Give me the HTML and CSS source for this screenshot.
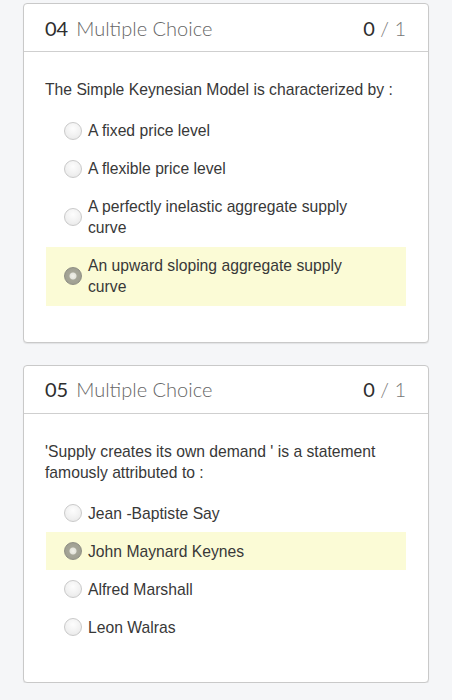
FILE: index.html
```html
<!DOCTYPE html>
<html>
<head>
<meta charset="utf-8">
<link rel="stylesheet" href="styles.css">
</head>
<body>
<div class="page">
  <section class="card">
    <header class="card-head">
      <div class="title"><span class="num">04</span><span class="type">Multiple Choice</span></div>
      <div class="score"><span class="got">0</span><span class="total"> / 1</span></div>
    </header>
    <div class="card-body">
      <p class="question">The Simple Keynesian Model is characterized by :</p>
      <ul class="options">
        <li class="option"><span class="radio"></span><span class="label">A fixed price level</span></li>
        <li class="option"><span class="radio"></span><span class="label">A flexible price level</span></li>
        <li class="option"><span class="radio"></span><span class="label">A perfectly inelastic aggregate supply curve</span></li>
        <li class="option selected"><span class="radio"></span><span class="label">An upward sloping aggregate supply curve</span></li>
      </ul>
    </div>
  </section>
  <section class="card">
    <header class="card-head">
      <div class="title"><span class="num">05</span><span class="type">Multiple Choice</span></div>
      <div class="score"><span class="got">0</span><span class="total"> / 1</span></div>
    </header>
    <div class="card-body">
      <p class="question">'Supply creates its own demand ' is a statement famously attributed to :</p>
      <ul class="options">
        <li class="option"><span class="radio"></span><span class="label">Jean -Baptiste Say</span></li>
        <li class="option selected"><span class="radio"></span><span class="label">John Maynard Keynes</span></li>
        <li class="option"><span class="radio"></span><span class="label">Alfred Marshall</span></li>
        <li class="option"><span class="radio"></span><span class="label">Leon Walras</span></li>
      </ul>
    </div>
  </section>
</div>
</body>
</html>
```
FILE: styles.css
```css
html, body {
  margin: 0;
  padding: 0;
  background: #f5f6f8;
}
.page {
  width: 452px;
  padding: 3px 0 0 23px;
  box-sizing: border-box;
  display: flex;
  flex-direction: column;
  gap: 22px;
}
.card {
  width: 406px;
  box-sizing: border-box;
  background: #fff;
  border: 1px solid #c9c9c9;
  border-radius: 4px;
  box-shadow: 0 1px 1px rgba(0,0,0,0.08);
}
.card-head {
  height: 47px;
  border-bottom: 1px solid #cfcfcf;
  display: flex;
  align-items: center;
  justify-content: space-between;
  padding: 0 22px 0 21px;
  font-family: Lato, "Open Sans", sans-serif;
  font-size: 20px;
}
.num {
  color: #2e2e2e;
  font-weight: 400;
  margin-right: 8px;
}
.type {
  color: #666;
  font-weight: 300;
}
.got {
  color: #2e2e2e;
}
.total {
  color: #777;
  font-weight: 300;
}
.card-body {
  padding: 27px 22px 36px 21px;
}
.question {
  margin: 0 0 11.5px;
  font-family: "Liberation Sans", Arial, sans-serif;
  font-size: 15.7px;
  line-height: 21px;
  color: #383838;
}
.options {
  list-style: none;
  margin: 0;
  padding: 0;
}
.option {
  display: flex;
  align-items: center;
  padding: 8.5px 40px 8.5px 18px;
  margin-left: 1px;
  font-family: "Liberation Sans", Arial, sans-serif;
  font-size: 15.7px;
  line-height: 21px;
  color: #383838;
}
.option.selected {
  background: #fbfbd6;
}
.radio {
  flex: none;
  width: 18px;
  height: 18px;
  box-sizing: border-box;
  border-radius: 50%;
  border: 1px solid #cacaca;
  background: radial-gradient(circle at 50% 35%, #fdfdfd 0%, #f0f0f0 60%, #e4e4e4 100%);
  margin-right: 6px;
}
.option.selected .radio {
  border: 1px solid #8e8e84;
  background: radial-gradient(circle, #f2f2ea 0, #e4e4dc 3px, #a6a698 4px, #9a9a8e 100%);
}
```
